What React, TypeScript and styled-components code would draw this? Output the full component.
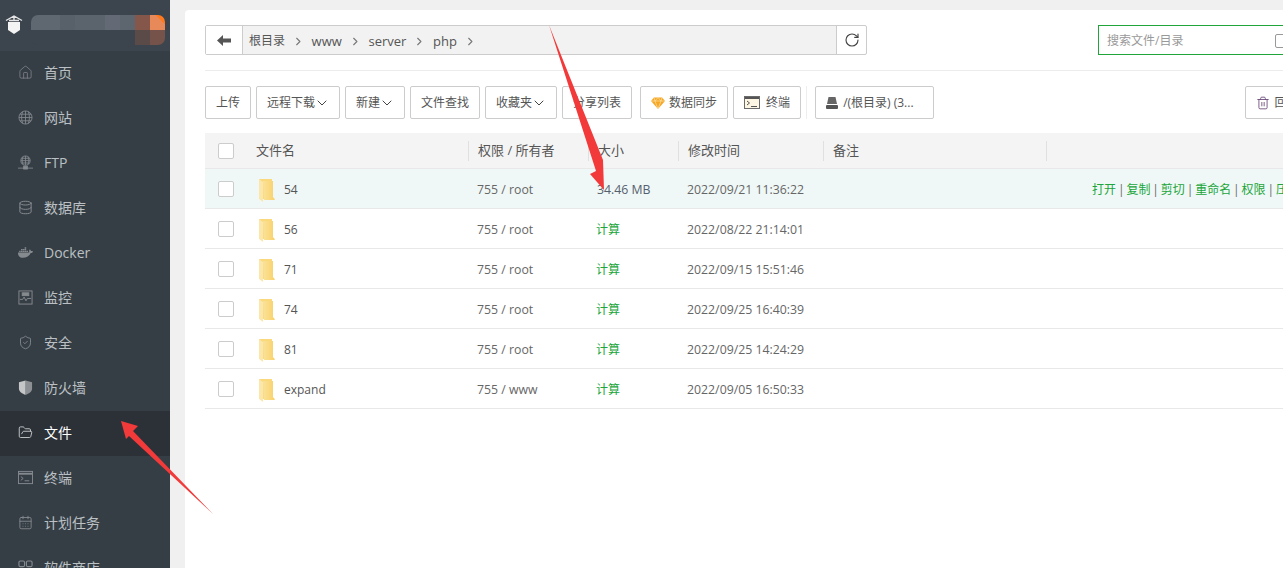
import React from 'react'
import styled, { createGlobalStyle } from 'styled-components'
import {
    CalendarDays,
    ChevronDown,
    ChevronRight,
    Database,
    FolderOpen,
    House,
    RotateCw,
    ShieldCheck,
    Trash2,
} from 'lucide-react'
import { FaDocker } from 'react-icons/fa'

const GlobalStyle = createGlobalStyle`
    html, body {
        margin: 0;
        padding: 0;
        height: 568px;
        overflow: hidden;
        background: #f0f0f0;
    }
    * {
        box-sizing: border-box;
    }
`

const Page = styled.div`
    display: flex;
    position: relative;
    width: 1283px;
    height: 568px;
    overflow: hidden;
    font-family: 'Open Sans', 'Noto Sans CJK SC', sans-serif;
    font-size: 12px;
    line-height: 20px;
    color: #555;
`

const Sidebar = styled.nav`
    flex: none;
    width: 170px;
    background: #363e45;
`

const Brand = styled.div`
    display: flex;
    align-items: flex-start;
    gap: 8px;
    height: 51px;
    padding: 15px 0 0 5px;
    background: #3c444d;
`

const Mosaic = styled.div`
    display: grid;
    grid-template-columns: 29px 15px 30px 15px 15px 15px 15px;
    grid-template-rows: 15px 15px;
    border-radius: 7px;
    overflow: hidden;
`

const MosaicCell = styled.div<{ $color: string; $span?: number }>`
    grid-column: span ${(props) => props.$span ?? 1};
    background: ${(props) => props.$color};
`

const NavItem = styled.div<{ $active?: boolean }>`
    display: flex;
    align-items: center;
    gap: 11px;
    height: 45px;
    padding: 0 0 2px 18px;
    font-size: 14px;
    color: ${(props) => (props.$active ? '#fff' : '#bbc0c4')};
    background: ${(props) => (props.$active ? '#2c3138' : 'transparent')};

    svg {
        flex: none;
        width: 15px;
        height: 15px;
        color: ${(props) => (props.$active ? '#cfd2d4' : '#858a8f')};
    }
`

const Main = styled.main`
    flex: none;
    width: 1113px;
    padding: 10px 0 0 15px;
`

const Panel = styled.div`
    width: 1200px;
    height: 558px;
    padding: 15px 20px;
    background: #fff;
    border-radius: 4px 0 0 0;
`

const TopBar = styled.div`
    display: flex;
    align-items: flex-start;
    height: 46px;
    border-bottom: 1px solid #ececec;
`

const PathBar = styled.div`
    display: flex;
    width: 662px;
    height: 30px;
    border: 1px solid #ccc;
    border-radius: 2px;
    background: #f2f2f2;
`

const PathBack = styled.div`
    display: flex;
    flex: none;
    align-items: center;
    justify-content: center;
    width: 37px;
    background: #fff;
    border-right: 1px solid #ccc;
    color: #555;
`

const Crumbs = styled.div`
    display: flex;
    flex: 1;
    align-items: center;
    padding: 2px 0 0 6px;
    font-size: 13px;
`

const Crumb = styled.span`
    display: flex;
    align-items: center;

    &:first-child {
        font-size: 12px;
    }

    svg {
        width: 26.6px;
        height: 13px;
        color: #777;
    }
`

const PathRefresh = styled(PathBack)`
    width: 30px;
    border-right: 0;
    border-left: 1px solid #ccc;
    border-radius: 0 2px 2px 0;
    color: #444;
`

const Search = styled.div`
    display: flex;
    flex: none;
    align-items: center;
    justify-content: space-between;
    width: 200px;
    height: 30px;
    margin-left: 231px;
    padding: 2px 8px 0;
    border: 1px solid #20a53a;
    font-size: 12px;
    color: #999;
`

const SearchBox = styled.span`
    width: 14px;
    height: 14px;
    border: 1px solid #999;
    border-radius: 2px;
`

const Actions = styled.div`
    display: flex;
    align-items: center;
    gap: 5px;
    height: 33px;
    margin: 15px 0 14px;
`

const Button = styled.div<{ $offset?: number; $gap?: number }>`
    display: flex;
    flex: none;
    align-items: center;
    justify-content: center;
    gap: ${(props) => props.$gap ?? 4}px;
    height: 33px;
    padding: 0 10px;
    margin-left: ${(props) => props.$offset ?? 0}px;
    border: 1px solid #ccc;
    border-radius: 2px;
    background: #fff;
    font-size: 12px;
    color: #555;
    white-space: nowrap;
`

const DiskButton = styled(Button)`
    padding-right: 19px;
`

const Caret = styled(ChevronDown)`
    flex: none;
    width: 16px;
    height: 16px;
    margin: 0 -1px 0 -5px;
    stroke-width: 1.5;
    color: #444;
`

const ToolSeparator = styled.span`
    flex: none;
    width: 1px;
    height: 33px;
    background: #eee;
`

const Row = styled.div<{ $selected?: boolean }>`
    display: grid;
    grid-template-columns: 51px 212px 120px 90px 145px 223px 1fr;
    align-items: center;
    height: 40px;
    padding-top: 1px;
    border-bottom: 1px solid #e8e8e8;
    background: ${(props) => (props.$selected ? '#f0f8f7' : '#fff')};
`

const HeaderRow = styled(Row)`
    height: 36px;
    padding-top: 0;
    background: #f4f4f4;
`

const HeadCell = styled.div<{ $divider?: boolean }>`
    display: flex;
    align-items: center;
    height: 20px;
    padding-bottom: 2px;
    padding-left: ${(props) => (props.$divider ? 9 : 0)}px;
    border-left: ${(props) => (props.$divider ? '1px solid #e0e0e0' : '0')};
    font-size: 13px;
    color: #555;
`

const Check = styled.span`
    display: block;
    width: 16px;
    height: 16px;
    margin-left: 13px;
    background: #fff;
    border: 1px solid #ccc;
    border-radius: 2px;
`

const NameCell = styled.div`
    display: flex;
    align-items: center;
    gap: 9px;
    margin-left: 2px;
    padding-top: 2px;
    font-size: 12px;
    color: #555;
`

const Cell = styled.div<{ $inset?: number; $green?: boolean }>`
    padding-top: 2px;
    padding-left: ${(props) => props.$inset ?? 9}px;
    font-size: ${(props) => (props.$green ? 12 : 12.3)}px;
    white-space: nowrap;
    color: ${(props) => (props.$green ? '#20a53a' : '#666')};
`

const SizeText = styled.span`
    color: #55606e;
`

const Operations = styled.div`
    padding-top: 2px;
    padding-left: 46px;
    font-size: 12px;
    color: #20a53a;
    white-space: nowrap;
`

const OperationBar = styled.span`
    margin: 0 1.9px;
    color: #666;
`

const ArrowOverlay = styled.svg`
    position: absolute;
    top: 0;
    left: 0;
    width: 1283px;
    height: 568px;
    pointer-events: none;
`

function ShieldLogo() {
    return (
        <svg width="18" height="20" viewBox="0 0 18 20">
            <path d="M3 7h12v8l-6 4-6-4z" fill="#f4f4f4" />
            <path d="M1 5.5 9 1l8 4.5M4 5.5h10M9 1v5" fill="none" stroke="#e6e6e6" strokeWidth="1.4" />
        </svg>
    )
}

function GlobeIcon() {
    return (
        <svg viewBox="0 0 16 16" fill="none" stroke="currentColor" strokeWidth="0.9">
            <circle cx="8" cy="8" r="7" />
            <path d="M1 8h14M2 4.5h12M2 11.5h12M8 1v14" />
            <path d="M5 1.7c-1.6 3.8-1.6 8.8 0 12.6M11 1.7c1.6 3.8 1.6 8.8 0 12.6" />
        </svg>
    )
}

function FtpIcon() {
    return (
        <svg viewBox="0 0 16 16" fill="none" stroke="currentColor" strokeWidth="0.9">
            <circle cx="8" cy="6" r="5" />
            <path d="M3 6h10M8 1v10M3.6 3.5h8.8M3.6 8.5h8.8M5.5 1.7c-1.4 2.6-1.4 6 0 8.6M10.5 1.7c1.4 2.6 1.4 6 0 8.6" />
            <path d="M0 14h16" />
            <rect x="6" y="12" width="4" height="3" fill="currentColor" />
        </svg>
    )
}

function MonitorIcon() {
    return (
        <svg viewBox="0 0 16 16" fill="none" stroke="currentColor" strokeWidth="1">
            <rect x="1" y="1" width="14" height="14" />
            <rect x="4.5" y="3" width="7" height="3" fill="currentColor" />
            <path d="M2 10h3l1.5-2.5 2 4 1.5-2.5h4" />
        </svg>
    )
}

function FirewallIcon() {
    return (
        <svg viewBox="0 0 16 16">
            <path d="M8 0.5 15 2.5v6.5c0 3.5-3.5 5.6-7 6.8z" fill="#8d9195" />
            <path d="M8 0.5 1 2.5v6.5c0 3.5 3.5 5.6 7 6.8z" fill="#c4c6c8" />
        </svg>
    )
}

function TerminalIcon() {
    return (
        <svg viewBox="0 0 16 16" fill="none" stroke="currentColor" strokeWidth="1">
            <rect x="0.5" y="1.5" width="15" height="13" />
            <path d="M1 4h14" strokeWidth="2" />
            <path d="m3 7 2.5 2L3 11M7 11.5h5" />
        </svg>
    )
}

function StoreIcon() {
    return (
        <svg viewBox="0 0 16 16" fill="none" stroke="currentColor" strokeWidth="1.2">
            <rect x="1" y="1" width="6" height="6" rx="1.5" />
            <rect x="9" y="1" width="6" height="6" rx="1.5" />
            <rect x="1" y="9" width="6" height="6" rx="1.5" />
            <rect x="9" y="9" width="6" height="6" rx="1.5" />
        </svg>
    )
}

function BackArrow() {
    return (
        <svg width="14" height="11" viewBox="0 0 14 11">
            <path d="M0 5.5 6 0v3.5h8v4H6V11z" fill="#555" />
        </svg>
    )
}

function FolderIcon() {
    return (
        <svg width="17" height="25" viewBox="0 0 17 25" style={{ flex: 'none' }}>
            <defs>
                <linearGradient id="folderFill" x1="0" x2="1" y1="0" y2="0">
                    <stop offset="0" stopColor="#fbe29a" />
                    <stop offset="1" stopColor="#f8d268" />
                </linearGradient>
            </defs>
            <path d="M1 1h13v18l3 2H5z" fill="#f9d97c" />
            <path d="M5 3h10v16l2 3H6z" fill="url(#folderFill)" />
            <path d="M1 1l4 3v20l-4-3z" fill="#fce7ab" />
        </svg>
    )
}

function GemIcon() {
    return (
        <svg width="14" height="12" viewBox="0 0 14 12">
            <path d="M3 0.5h8L14 4 7 12 0 4z" fill="#f5a623" />
            <path d="M0 4h14M4 4l3 8 3-8M3 .5 4 4l3-3.5L10 4l1-3.5" fill="none" stroke="#fde3a8" strokeWidth=".7" />
        </svg>
    )
}

function WindowIcon() {
    return (
        <svg width="16" height="13" viewBox="0 0 16 13" fill="none">
            <rect x="0.5" y="0.5" width="15" height="12" fill="#fdf6e3" stroke="#6b6b6b" />
            <path d="M1 2h14" stroke="#555" strokeWidth="2" />
            <path d="m3 5 2.5 2L3 9M7 10.5h6" stroke="#555" />
        </svg>
    )
}

function DiskIcon() {
    return (
        <svg width="12" height="12" viewBox="0 0 12 12">
            <path d="M2.5 0h7L11 7H1z" fill="#666" />
            <rect y="8" width="12" height="4" rx="1" fill="#555" />
        </svg>
    )
}

const navItems: { label: string; icon: React.ReactNode; active?: boolean }[] = [
    { label: '首页', icon: <House strokeWidth={1.2} /> },
    { label: '网站', icon: <GlobeIcon /> },
    { label: 'FTP', icon: <FtpIcon /> },
    { label: '数据库', icon: <Database strokeWidth={1.6} /> },
    { label: 'Docker', icon: <FaDocker /> },
    { label: '监控', icon: <MonitorIcon /> },
    { label: '安全', icon: <ShieldCheck strokeWidth={1.4} /> },
    { label: '防火墙', icon: <FirewallIcon /> },
    { label: '文件', icon: <FolderOpen strokeWidth={1.4} />, active: true },
    { label: '终端', icon: <TerminalIcon /> },
    { label: '计划任务', icon: <CalendarDays strokeWidth={1.4} /> },
    { label: '软件商店', icon: <StoreIcon /> },
]

const crumbs = ['根目录', 'www', 'server', 'php']

const files = [
    { name: '54', owner: '755 / root', size: '34.46 MB', time: '2022/09/21 11:36:22' },
    { name: '56', owner: '755 / root', time: '2022/08/22 21:14:01' },
    { name: '71', owner: '755 / root', time: '2022/09/15 15:51:46' },
    { name: '74', owner: '755 / root', time: '2022/09/25 16:40:39' },
    { name: '81', owner: '755 / root', time: '2022/09/25 14:24:29' },
    { name: 'expand', owner: '755 / www', time: '2022/09/05 16:50:33' },
]

const operations = ['打开', '复制', '剪切', '重命名', '权限', '压缩']

export default function App() {
    return (
        <Page>
            <GlobalStyle />
            <Sidebar>
                <Brand>
                    <ShieldLogo />
                    <Mosaic>
                        <MosaicCell $color="#5f6770" />
                        <MosaicCell $color="#58616a" />
                        <MosaicCell $color="#5b636d" />
                        <MosaicCell $color="#636a75" />
                        <MosaicCell $color="#5d656f" />
                        <MosaicCell $color="#85574a" />
                        <MosaicCell $color="linear-gradient(45deg, #e8895a 70%, #ff7a1f 70%)" />
                        <MosaicCell $color="#3c444d" $span={5} />
                        <MosaicCell $color="#5a4a48" />
                        <MosaicCell $color="#75524a" />
                    </Mosaic>
                </Brand>
                {navItems.map((item) => (
                    <NavItem key={item.label} $active={item.active}>
                        {item.icon}
                        {item.label}
                    </NavItem>
                ))}
            </Sidebar>
            <Main>
                <Panel>
                    <TopBar>
                        <PathBar>
                            <PathBack>
                                <BackArrow />
                            </PathBack>
                            <Crumbs>
                                {crumbs.map((crumb) => (
                                    <Crumb key={crumb}>
                                        {crumb}
                                        <ChevronRight />
                                    </Crumb>
                                ))}
                            </Crumbs>
                            <PathRefresh>
                                <RotateCw size={16} strokeWidth={1.7} />
                            </PathRefresh>
                        </PathBar>
                        <Search>
                            搜索文件/目录
                            <SearchBox />
                        </Search>
                    </TopBar>
                    <Actions>
                        <Button>上传</Button>
                        <Button>
                            远程下载
                            <Caret />
                        </Button>
                        <Button>
                            新建
                            <Caret />
                        </Button>
                        <Button>文件查找</Button>
                        <Button>
                            收藏夹
                            <Caret />
                        </Button>
                        <Button>分享列表</Button>
                        <Button $offset={3}>
                            <GemIcon />
                            数据同步
                        </Button>
                        <Button $gap={6}>
                            <WindowIcon />
                            终端
                        </Button>
                        <ToolSeparator />
                        <DiskButton $offset={3} $gap={5}>
                            <DiskIcon />
                            /(根目录) (3...
                        </DiskButton>
                        <Button $offset={306} $gap={5}>
                            <Trash2 size={14} strokeWidth={1.5} color="#6b4a7a" />
                            回收站
                        </Button>
                    </Actions>
                    <HeaderRow>
                        <Check />
                        <HeadCell>文件名</HeadCell>
                        <HeadCell $divider>权限 / 所有者</HeadCell>
                        <HeadCell $divider>大小</HeadCell>
                        <HeadCell $divider>修改时间</HeadCell>
                        <HeadCell $divider>备注</HeadCell>
                        <HeadCell $divider />
                    </HeaderRow>
                    {files.map((file) => (
                        <Row key={file.name} $selected={Boolean(file.size)}>
                            <Check />
                            <NameCell>
                                <FolderIcon />
                                {file.name}
                            </NameCell>
                            <Cell>{file.owner}</Cell>
                            {file.size ? (
                                <Cell $inset={9}>
                                    <SizeText>{file.size}</SizeText>
                                </Cell>
                            ) : (
                                <Cell $green $inset={8}>
                                    计算
                                </Cell>
                            )}
                            <Cell>{file.time}</Cell>
                            <div />
                            {file.size ? (
                                <Operations>
                                    {operations.map((op, index) => (
                                        <React.Fragment key={op}>
                                            {index > 0 && <OperationBar>|</OperationBar>}
                                            {op}
                                        </React.Fragment>
                                    ))}
                                </Operations>
                            ) : (
                                <div />
                            )}
                        </Row>
                    ))}
                </Panel>
            </Main>
            <ArrowOverlay viewBox="0 0 1283 568">
                <polygon points="549,25 603,160 604,190 590,174 596,171" fill="#f23a3a" />
                <polygon points="121,421 138,426 133,431 213,514 129,436 126,439" fill="#f23a3a" />
            </ArrowOverlay>
        </Page>
    )
}
